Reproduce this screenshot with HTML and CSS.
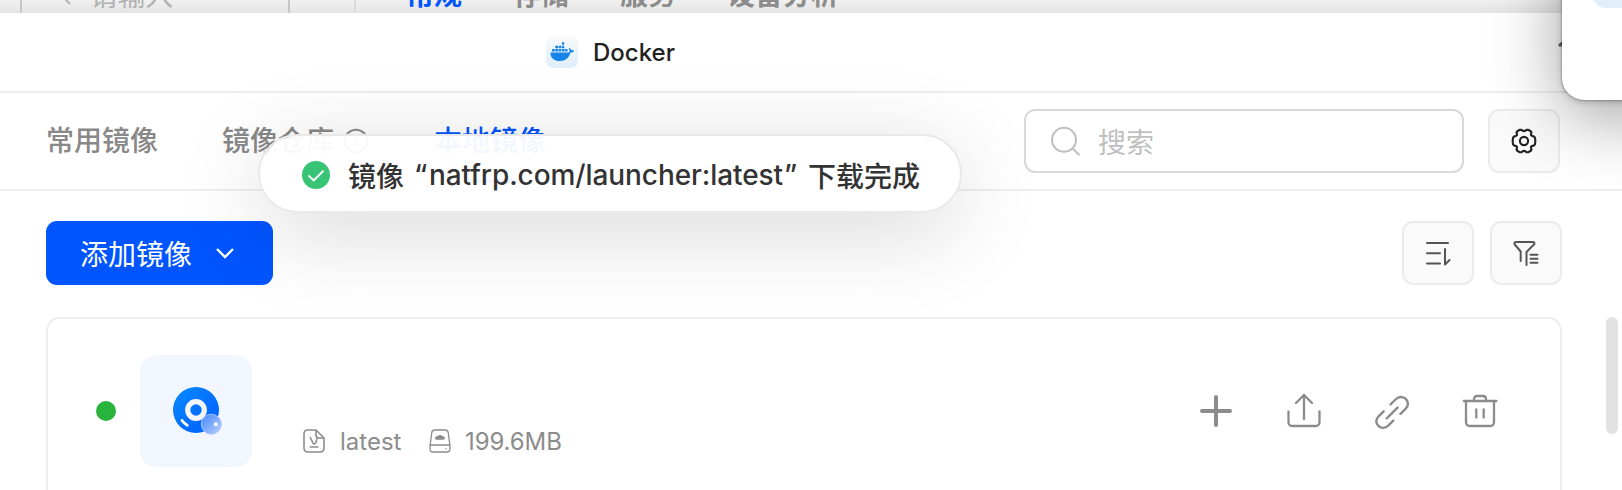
FILE: index.html
```html
<!DOCTYPE html>
<html lang="zh-CN">
<head>
<meta charset="utf-8">
<title>Docker</title>
<link rel="stylesheet" href="styles.css">
</head>
<body>
<div class="screen">
  <div class="backbar">
    <div class="back-search">
      <svg class="back-chevron" width="12" height="20" viewBox="0 0 12 20"><path d="M2 2l8 8-8 8" transform="matrix(-1 0 0 1 12 0)" fill="none" stroke="#b5b5b5" stroke-width="2"/></svg>
      <span>请输入</span>
    </div>
    <div class="back-tabs">
      <span class="is-active">常规</span><span>存储</span><span>服务</span><span>设备分析</span>
    </div>
  </div>

  <header class="titlebar">
    <svg class="docker" width="32" height="32" viewBox="0 0 32 32">
      <defs><linearGradient id="tile" x1="0" y1="0" x2="0" y2="1"><stop stop-color="#f8fafc"/><stop offset="1" stop-color="#dfeefa"/></linearGradient></defs>
      <rect width="32" height="32" rx="7" fill="url(#tile)"/>
      <g fill="#1785e8">
        <path d="M4.5 16.400h18.300c.9-.3 1.100-1.200.6-2.200l-.6-1.800 1-.3 1.400 1.900c1.200-.1 2.100.1 3 .7-.7 1.300-1.900 1.800-3.700 1.800-1.700 5.600-5 8.500-10.500 8.500-6 0-9.700-3.200-9.500-8.600z"/>
        <path d="M6 13h2.700v2.400H6zM9.300 13H12v2.400H9.300zM12.600 13h2.700v2.400h-2.700zM15.900 13h2.700v2.400h-2.700zM19.100 13h2.400v2.400h-2.400zM9.300 9.700H12v2.500H9.300zM12.600 9.700h2.700v2.500h-2.700zM15.900 9.700h2.300v2.500h-2.300zM15.900 6.300h2.300v2.500h-2.300z"/>
      </g>
    </svg>
    <span class="title">Docker</span>
    <svg class="window-caret" width="20" height="12" viewBox="0 0 20 12"><path d="M2 9l8-7 8 7" fill="none" stroke="#666" stroke-width="3"/></svg>
  </header>

  <nav class="tabrow">
    <div class="tabs">
      <span class="tab tab-first">常用镜像</span>
      <span class="tab tab-repo">镜像仓库
        <svg width="26" height="26" viewBox="0 0 26 26" fill="none" stroke="#8c8c8c" stroke-width="2"><circle cx="13" cy="13" r="11.300"/><path d="M13 11.500v7M13 6.800v2.400"/></svg>
      </span>
      <span class="tab tab-local">本地镜像</span>
    </div>
    <div class="search">
      <svg width="30" height="30" viewBox="0 0 30 30" fill="none" stroke="#bfbfbf" stroke-width="2" stroke-linecap="round"><circle cx="13" cy="13.800" r="12"/><path d="M22 22.800l6 6"/></svg>
      <span>搜索</span>
    </div>
    <div class="square">
      <svg width="26" height="26" viewBox="0 0 26 26" fill="none" stroke="#222" stroke-width="2.100" stroke-linejoin="round"><path d="M8.500 1.900L10.400 1.700Q13 4.600 15.600 1.700L17.500 1.900L20 3.500L20.500 4.800Q18.700 8 22.600 8.400L23.800 9.300Q24.800 13 23.800 16.700L22.600 17.600Q18.700 18 20.500 21.200L20 22.500L17.500 24.100L15.600 24.300Q13 21.400 10.400 24.300L8.500 24.100L6 22.500L5.500 21.200Q7.300 18 3.400 17.600L2.200 16.700Q1.200 13 2.200 9.300L3.400 8.400Q7.300 8 5.500 4.800L6 3.500Z"/><circle cx="13" cy="13" r="4.100"/></svg>
    </div>
  </nav>

  <main class="content">
    <div class="toolbar">
      <button class="add"><span>添加镜像</span><svg width="20" height="13" viewBox="0 0 20 13"><path d="M2 2l8 8 8-8" fill="none" stroke="#fff" stroke-width="2.400"/></svg></button>
      <div class="tools">
        <div class="square">
          <svg width="26" height="26" viewBox="0 0 26 26" fill="none" stroke="#555" stroke-width="2" stroke-linecap="round" stroke-linejoin="round"><path d="M2 3h21M2 13.300h13M2 23.500h13M20 9v15.500l4.500-4.500"/></svg>
        </div>
        <div class="square">
          <svg width="26" height="26" viewBox="0 0 26 26" fill="none" stroke="#555" stroke-width="2" stroke-linecap="round" stroke-linejoin="round"><path d="M7.700 21v-9.500L1.700 4.500Q.8 2 3.300 2h16.500Q22 2 21.200 4.300L13.500 12v13M17.500 14.800h7M17.500 18.800h7M17.500 22.800h7"/></svg>
        </div>
      </div>
    </div>

    <section class="card">
      <i class="status"></i>
      <div class="image-tile">
        <svg width="52" height="52" viewBox="0 0 52 52">
          <defs>
            <linearGradient id="disc" x1="0" y1="0" x2="1" y2="1"><stop stop-color="#078bff"/><stop offset="1" stop-color="#005bff"/></linearGradient>
            <linearGradient id="ball" x1="0" y1="0" x2="1" y2="1"><stop stop-color="#4386fb"/><stop offset="1" stop-color="#b9d1ff"/></linearGradient>
          </defs>
          <circle cx="26" cy="25" r="23" fill="url(#disc)"/>
          <circle cx="26" cy="25" r="8.300" fill="none" stroke="#f3f7fd" stroke-width="5.200"/>
          <path d="M12 35.500q2.300 3.200 5.300 4.700" fill="none" stroke="#fff" stroke-width="2.800" stroke-linecap="round"/>
          <circle cx="41.300" cy="39.200" r="10" fill="url(#ball)" stroke="#a6c4ff"/>
          <circle cx="45.800" cy="39.200" r="2" fill="#fff"/>
        </svg>
      </div>
      <div class="meta">
        <svg width="22" height="24" viewBox="0 0 22 24" fill="none" stroke="#8c8c8c" stroke-width="1.600" stroke-linecap="round" stroke-linejoin="round"><path d="M13 1H5Q1 1 1 5v14q0 4 4 4h12q4 0 4-4V9zM13 1v5q0 3 3 3h5M7.300 8.500l3.200 6.500q2.800 0 3.200-5M7.300 18h7.400"/></svg>
        <span class="tag">latest</span>
        <svg class="drive" width="22" height="24" viewBox="0 0 22 24" fill="none" stroke="#8c8c8c" stroke-width="1.300" stroke-linejoin="round"><path d="M1 17l1.700-13Q3 1 6 1h10q3 0 3.300 3L21 17v3q0 3-3 3H4q-3 0-3-3v-3q.3-1 2-1h16q1.700 0 2 1"/><path d="M7 10q-1-2.300 1.700-2.300 2.300-2 4.500 0Q16 7.800 14.800 10z" fill="#8c8c8c"/><circle cx="17" cy="19.700" r=".7" fill="#8c8c8c" stroke="none"/></svg>
        <span class="size">199.6MB</span>
      </div>
      <div class="actions">
        <svg width="36" height="36" viewBox="0 0 36 36" stroke-width="4"><path d="M18 4v28M4 18h28"/></svg>
        <svg width="36" height="36" viewBox="0 0 36 36" stroke-width="2.300"><path d="M18 26V2M10 10l8-8 8 8M2.500 18.500V29q0 4 4 4h23q4 0 4-4V18.500"/></svg>
        <svg width="36" height="36" viewBox="0 0 36 36" stroke-width="2.400"><path d="M16.500 11.500l5-5C26 2 31 4.500 32.300 6.500c2.400 3 2 6.300-.8 9.300l-5 5M9.600 18.300l-5 5c-2.800 3-2.800 6.500-.5 9.300 2.500 2.600 6.500 3.200 9.900.3l5.300-5.300M12.800 25.300l10.700-10.700"/></svg>
        <svg width="36" height="36" viewBox="0 0 36 36" stroke-width="2.300"><path d="M1.800 8h32.500M12 8V6q0-3 3-3h6q3 0 3 3v2M4 8v21q0 4 4 4h20q4 0 4-4V8M14.300 16.500v8M21.700 16.500v8"/></svg>
      </div>
    </section>
  </main>

  <div class="scrollbar"></div>
  <div class="toast">
    <svg width="28" height="28" viewBox="0 0 28 28"><circle cx="14" cy="14" r="14" fill="#37c474"/><path d="M6.500 14.500l5.200 5 9.800-9.700" fill="none" stroke="#fff" stroke-width="1.900"/></svg>
    <span class="t-name">镜像</span><span class="t-open">“</span><span class="t-url">natfrp.com/launcher:latest</span><span class="t-close">”</span><span>下载完成</span>
  </div>
  <aside class="popup"><div class="popup-item"></div></aside>
</div>
</body>
</html>
```
FILE: styles.css
```css
* { box-sizing: border-box; }
body { margin: 0; font-family: Inter, "Noto Sans CJK SC", sans-serif; background: #fff; }
svg { display: block; flex: none; }
.screen { position: relative; width: 1622px; height: 490px; overflow: hidden; }

.backbar { height: 13px; display: flex; overflow: hidden; background: linear-gradient(#f0f0f0, #e4e4e4); font-size: 28px; line-height: 36px; white-space: nowrap; }
.back-search { display: flex; width: 270px; height: 13px; margin-left: 20px; padding-left: 38px; border: solid #c6c6c6; border-width: 0 2px; color: #b2b2b2; align-items: flex-end; }
.back-chevron { margin-right: 18px; margin-bottom: 7px; }
.back-search span { margin-bottom: -1px; letter-spacing: -.5px; }
.back-tabs { display: flex; gap: 51px; height: 13px; margin-left: 64px; padding-left: 50px; border-left: 2px solid #dcdcdc; color: #8c8c8c; font-weight: 700; align-items: flex-end; }
.back-tabs span { margin-bottom: 0; }
.back-tabs .is-active { color: #0055ff; }

.titlebar { display: flex; align-items: center; height: 80px; padding-left: 546px; border-bottom: 2px solid #eee; }
.title { margin-left: 15px; font-size: 24px; font-weight: 500; color: #222; }
.window-caret { margin: -18px 45px 0 auto; }

.tabrow { display: flex; height: 98px; padding: 16px 62px 0 46px; border-bottom: 2px solid #eee; }
.tabs { display: flex; width: 978px; height: 64px; font-size: 28px; font-weight: 500; line-height: 64px; color: #888; white-space: nowrap; }
.tab-first { width: 176px; }
.tab-repo { display: flex; align-items: center; gap: 9px; width: 212px; }
.tab-local { height: 76px; color: #0055ff; background: linear-gradient(#0055ff, #0055ff) 34px 70px / 44px 4px no-repeat; }
.search { display: flex; align-items: center; width: 440px; height: 64px; margin-right: 24px; padding-left: 25px; border: 2px solid #d9d9d9; border-radius: 11px; color: #bfbfbf; font-size: 28px; }
.search span { margin-left: 17px; }
.square { display: flex; align-items: center; justify-content: center; width: 72px; height: 64px; border: 2px solid #ebebeb; border-radius: 11px; background: #fafafa; }

.content { padding: 30px 60px 0 46px; }
.toolbar { display: flex; justify-content: space-between; }
.add { display: flex; align-items: center; gap: 23px; width: 227px; height: 64px; padding: 0 0 0 34px; border: 0; border-radius: 11px; background: #0055ff; color: #fff; font: 400 28px Inter, "Noto Sans CJK SC", sans-serif; }
.tools { display: flex; gap: 16px; }
.card { display: flex; align-items: flex-start; height: 200px; margin-top: 32px; border: 2px solid #eee; border-radius: 14px; }
.status { width: 20px; height: 20px; margin: 82px 24px 0 48px; border-radius: 50%; background: #28b33c; }
.image-tile { display: flex; align-items: center; justify-content: center; width: 112px; height: 112px; margin-top: 36px; border-radius: 16px; background: #f2f7ff; }
.meta { display: flex; align-items: center; margin: 107px 0 0 51px; height: 30px; color: #8c8c8c; font-size: 24px; }
.tag { width: 104px; padding-left: 15px; }
.size { margin-left: 14px; letter-spacing: -.1px; }
.actions { display: flex; gap: 52px; margin: 74px 62px 0 auto; fill: none; stroke: #8c8c8c; stroke-linecap: round; stroke-linejoin: round; }

.scrollbar { position: absolute; left: 1606px; top: 317px; width: 12px; height: 117px; border-radius: 6px; background: #e2e2e2; }
.toast { position: absolute; left: 258px; top: 134px; display: flex; align-items: center; width: 704px; height: 79px; padding: 3px 0 0 42px; border: 2px solid #e9e9e9; border-radius: 40px; background: rgba(255,255,255,.95); background-clip: padding-box; box-shadow: 0 18px 90px rgba(0,0,0,.16); color: #333; font-size: 28px; font-weight: 500; white-space: nowrap; }
.t-name { width: 66px; margin-left: 18px; }
.t-open { width: 15px; }
.t-url { width: 355px; letter-spacing: -.08px; }
.t-close { width: 24px; }
.popup { position: absolute; left: 1562px; top: -60px; width: 120px; height: 160px; padding-left: 30px; border-radius: 22px; background: #fff; box-shadow: 0 0 2px rgba(0,0,0,.5), 0 2px 6px rgba(0,0,0,.2), 0 16px 70px rgba(0,0,0,.38); }
.popup-item { height: 68px; border-radius: 14px; background: #e1effa; }
```
